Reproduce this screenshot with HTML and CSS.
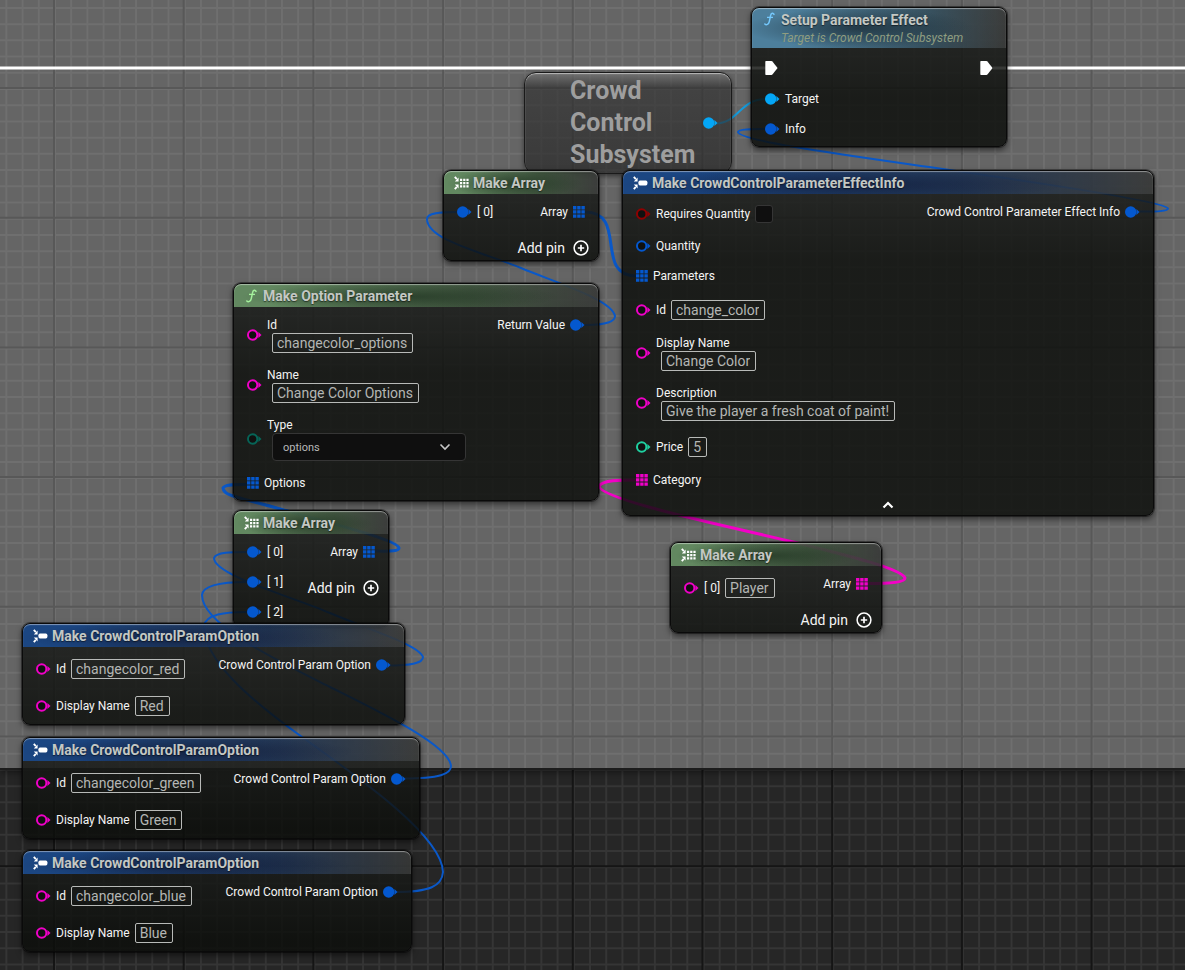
FILE: index.html
```html
<!DOCTYPE html>
<html lang="en">
<head>
    <meta charset="UTF-8">
    <meta name="viewport" content="width=device-width, initial-scale=1.0">
    <title>Blueprint Graph</title>
    <link rel="stylesheet" href="styles.css">
</head>
<body>

    <!-- Icons -->
    <svg class="symbols" width="0" height="0" aria-hidden="true">
        <symbol id="pin" viewBox="0 0 15 12">
            <circle cx="5.7" cy="6" r="5.7" fill="currentColor"/>
            <path d="M11.4 3L14.5 6L11.4 9z" fill="currentColor"/>
        </symbol>
        <symbol id="pin-open" viewBox="0 0 15 12">
            <circle cx="5.7" cy="6" r="4.7" fill="#101110" stroke="currentColor" stroke-width="2"/>
            <path d="M11.4 3L14.5 6L11.4 9z" fill="currentColor"/>
        </symbol>
        <symbol id="pin-array" viewBox="0 0 12 12">
            <path d="M0 0h3.400v3.400H0zM4.200 0h3.400v3.400H4.200zM8.400 0h3.400v3.400H8.400zM0 4.200h3.400v3.400H0zM4.200 4.200h3.400v3.400H4.200zM8.400 4.200h3.400v3.400H8.400zM0 8.400h3.400v3.400H0zM4.200 8.400h3.400v3.400H4.200zM8.400 8.400h3.400v3.400H8.400z" fill="currentColor"/>
        </symbol>
        <symbol id="pin-exec" viewBox="0 0 13 14">
            <path d="M1 0H6.5Q7 0 7.4.4L12.6 7L7.4 13.6Q7 14 6.5 14H1Q.3 14 .3 13.3V.7Q.3 0 1 0z" fill="#fff"/>
        </symbol>
        <symbol id="icon-struct" viewBox="0 0 15 14">
            <path d="M.8 .8L2.8 3.200M.8 13.2L2.8 10.800" stroke="#fff" stroke-width="1.800"/>
            <path d="M4.600 1.600V5.400H.8zM4.600 12.400V8.600H.8z" fill="#fff"/>
            <rect x="5.4" y="4.6" width="9" height="4.8" rx="1.6" fill="#fff"/>
        </symbol>
        <symbol id="icon-array" viewBox="0 0 15 14">
            <path d="M.8 .8L2.8 3.200M.8 13.2L2.8 10.800" stroke="#fff" stroke-width="1.800"/>
            <path d="M4.600 1.600V5.400H.8zM4.600 12.400V8.600H.8z" fill="#fff"/>
            <path d="M6 2.800h2.200v2.200H6zM9.2 2.800h2.200v2.200h-2.200zM12.4 2.800h2.200v2.200h-2.200zM6 6h2.200v2.200H6zM9.2 6h2.200v2.200h-2.200zM12.4 6h2.200v2.200h-2.200zM6 9.200h2.200v2.200H6zM9.2 9.200h2.200v2.200h-2.200zM12.4 9.200h2.200v2.200h-2.200z" fill="#fff"/>
        </symbol>
        <symbol id="icon-function" viewBox="0 0 15 14">
            <path d="M12 2.4C11.2 .6 9.2 1 8.7 3.2L7.2 9.8C6.6 12.4 4.4 13.4 2.8 12" fill="none" stroke="currentColor" stroke-width="1.5" stroke-linecap="round"/>
            <path d="M5 5.4H11" stroke="currentColor" stroke-width="1.3"/>
        </symbol>
        <symbol id="icon-plus" viewBox="0 0 16 16">
            <circle cx="8" cy="8" r="6.9" fill="none" stroke="#fff" stroke-width="1.5"/>
            <path d="M8 4.8V11.2M4.8 8H11.2" stroke="#fff" stroke-width="1.7"/>
        </symbol>
    </svg>

    <main class="graph">

        <!-- Grid: each path is one very wide stroke, its dashes are the lines -->
        <svg class="grid" aria-hidden="true">
            <g class="minor">
                <path d="M-10.850 2000H4000"/>
                <path d="M2000 -9.270V4000"/>
            </g>
            <g class="major">
                <path d="M-76.700 2000H4000"/>
                <path d="M2000 -42.700V4000"/>
            </g>
        </svg>

        <div class="comment-area"></div>

        <svg class="wires" aria-hidden="true">
            <g class="wire-exec">
                <path d="M0 68H766"/>
                <path d="M993 68H4000"/>
            </g>
            <path class="wire-object" d="M716 123.5C738 123.5 740 99 766 99"/>
            <g class="wire-struct">
                <path d="M1137 211.5C1158 212 1168 211 1168 208.5C1166 203 1090 190 946 169.500C860 157 738 141 738 132C738 129 752 129 766 129"/>
                <path d="M582 325C608 325.500 615 321 615 316C612 300 560 284 521 268S427 240 427 219C427 213 440 212 457 212"/>
                <path d="M387 665.500C412 665.500 423 663 423 657C419 645 370 630 330 613S214 575 214 558C216 552 232 552 247 552"/>
                <path d="M403 778.500C440 778.500 451 774 451 766C449 745 380 712 330 687S202 625 202 595C203 584 225 582 247 582"/>
                <path d="M395 892C430 892 442 886 443 872C442 835 355 775 302 737S204 660 204 626C206 614 225 612 247 612"/>
            </g>
            <g class="wire-struct thick">
                <path d="M585 212C628 212 594 276 636 276"/>
                <path d="M375 551C392 551.500 399 551 399 548C398 540 330 523 282 509.500S224 496 223 488C225 484 235 484.500 247 484.500"/>
            </g>
            <path class="wire-string" d="M868 583.500C892 583.500 905 582 905 578C902 569 850 556 793 542S600 500 599 486C603 480 620 480 636 480"/>
        </svg>

        <!-- Crowd Control Subsystem -->
        <section class="node variable subsystem">
            <h2>Crowd Control Subsystem</h2>
            <svg class="pin object"><use href="#pin"/></svg>
        </section>

        <!-- Setup Parameter Effect -->
        <section class="node setup">
            <header class="head cyan tall">
                <svg class="icon"><use href="#icon-function"/></svg>
                <div>
                    <h2>Setup Parameter Effect</h2>
                    <p>Target is Crowd Control Subsystem</p>
                </div>
            </header>
            <div class="body">
                <div class="inputs">
                    <div class="row exec"><svg class="pin"><use href="#pin-exec"/></svg></div>
                    <div class="row"><svg class="pin object"><use href="#pin"/></svg><span>Target</span></div>
                    <div class="row"><svg class="pin struct"><use href="#pin"/></svg><span>Info</span></div>
                </div>
                <div class="outputs">
                    <div class="row exec"><svg class="pin"><use href="#pin-exec"/></svg></div>
                </div>
            </div>
        </section>

        <!-- Make Array: parameters -->
        <section class="node array-params">
            <header class="head green">
                <svg class="icon"><use href="#icon-array"/></svg>
                <h2>Make Array</h2>
            </header>
            <div class="body">
                <div class="inputs">
                    <div class="row"><svg class="pin struct"><use href="#pin"/></svg><span>[ 0]</span></div>
                </div>
                <div class="outputs">
                    <div class="row"><span>Array</span><svg class="pin array struct"><use href="#pin-array"/></svg></div>
                    <button class="add-pin" type="button">Add pin <svg><use href="#icon-plus"/></svg></button>
                </div>
            </div>
        </section>

        <!-- Make CrowdControlParameterEffectInfo -->
        <section class="node effect-info">
            <header class="head blue">
                <svg class="icon"><use href="#icon-struct"/></svg>
                <h2>Make CrowdControlParameterEffectInfo</h2>
            </header>
            <div class="body">
                <div class="inputs">
                    <div class="row check">
                        <svg class="pin bool"><use href="#pin-open"/></svg>
                        <label for="requires">Requires Quantity</label>
                        <input type="checkbox" id="requires">
                    </div>
                    <div class="row"><svg class="pin struct"><use href="#pin-open"/></svg><span>Quantity</span></div>
                    <div class="row"><svg class="pin array struct"><use href="#pin-array"/></svg><span>Parameters</span></div>
                    <div class="row field">
                        <svg class="pin string"><use href="#pin-open"/></svg>
                        <label for="effect-id">Id</label>
                        <input type="text" id="effect-id" value="change_color">
                    </div>
                    <div class="row stacked">
                        <svg class="pin string"><use href="#pin-open"/></svg>
                        <div>
                            <label for="effect-name">Display Name</label>
                            <input type="text" id="effect-name" value="Change Color">
                        </div>
                    </div>
                    <div class="row stacked">
                        <svg class="pin string"><use href="#pin-open"/></svg>
                        <div>
                            <label for="effect-desc">Description</label>
                            <input type="text" id="effect-desc" value="Give the player a fresh coat of paint!">
                        </div>
                    </div>
                    <div class="row field">
                        <svg class="pin int"><use href="#pin-open"/></svg>
                        <label for="effect-price">Price</label>
                        <input type="text" id="effect-price" value="5">
                    </div>
                    <div class="row"><svg class="pin array string"><use href="#pin-array"/></svg><span>Category</span></div>
                </div>
                <div class="outputs">
                    <div class="row"><span>Crowd Control Parameter Effect Info</span><svg class="pin struct"><use href="#pin"/></svg></div>
                </div>
            </div>
            <button class="collapse" type="button" aria-label="Collapse">
                <svg viewBox="0 0 12 8"><path d="M1.500 6.500L6 2L10.500 6.500" fill="none" stroke="#fff" stroke-width="2.200"/></svg>
            </button>
        </section>

        <!-- Make Option Parameter -->
        <section class="node option-param">
            <header class="head green">
                <svg class="icon"><use href="#icon-function"/></svg>
                <h2>Make Option Parameter</h2>
            </header>
            <div class="body">
                <div class="inputs">
                    <div class="row stacked">
                        <svg class="pin string"><use href="#pin-open"/></svg>
                        <div>
                            <label for="option-id">Id</label>
                            <input type="text" id="option-id" value="changecolor_options">
                        </div>
                    </div>
                    <div class="row stacked">
                        <svg class="pin string"><use href="#pin-open"/></svg>
                        <div>
                            <label for="option-name">Name</label>
                            <input type="text" id="option-name" value="Change Color Options">
                        </div>
                    </div>
                    <div class="row stacked type">
                        <svg class="pin enum"><use href="#pin-open"/></svg>
                        <div>
                            <label for="option-type">Type</label>
                            <div class="select">
                                <select id="option-type">
                                    <option>options</option>
                                </select>
                                <svg viewBox="0 0 12 8"><path d="M1.500 1.500L6 6L10.500 1.500" fill="none" stroke="#c8c8c8" stroke-width="1.600"/></svg>
                            </div>
                        </div>
                    </div>
                    <div class="row"><svg class="pin array struct"><use href="#pin-array"/></svg><span>Options</span></div>
                </div>
                <div class="outputs">
                    <div class="row"><span>Return Value</span><svg class="pin struct"><use href="#pin"/></svg></div>
                </div>
            </div>
        </section>

        <!-- Make Array: options -->
        <section class="node array-options">
            <header class="head green">
                <svg class="icon"><use href="#icon-array"/></svg>
                <h2>Make Array</h2>
            </header>
            <div class="body">
                <div class="inputs">
                    <div class="row"><svg class="pin struct"><use href="#pin"/></svg><span>[ 0]</span></div>
                    <div class="row"><svg class="pin struct"><use href="#pin"/></svg><span>[ 1]</span></div>
                    <div class="row"><svg class="pin struct"><use href="#pin"/></svg><span>[ 2]</span></div>
                </div>
                <div class="outputs">
                    <div class="row"><span>Array</span><svg class="pin array struct"><use href="#pin-array"/></svg></div>
                    <button class="add-pin" type="button">Add pin <svg><use href="#icon-plus"/></svg></button>
                </div>
            </div>
        </section>

        <!-- Make Array: category -->
        <section class="node array-category">
            <header class="head green">
                <svg class="icon"><use href="#icon-array"/></svg>
                <h2>Make Array</h2>
            </header>
            <div class="body">
                <div class="inputs">
                    <div class="row field">
                        <svg class="pin string"><use href="#pin-open"/></svg>
                        <label for="category-0">[ 0]</label>
                        <input type="text" id="category-0" value="Player">
                    </div>
                </div>
                <div class="outputs">
                    <div class="row"><span>Array</span><svg class="pin array string"><use href="#pin-array"/></svg></div>
                    <button class="add-pin" type="button">Add pin <svg><use href="#icon-plus"/></svg></button>
                </div>
            </div>
        </section>

        <!-- Make CrowdControlParamOption: red, green, blue -->
        <section class="node param-red">
            <header class="head blue">
                <svg class="icon"><use href="#icon-struct"/></svg>
                <h2>Make CrowdControlParamOption</h2>
            </header>
            <div class="body">
                <div class="inputs">
                    <div class="row field">
                        <svg class="pin string"><use href="#pin-open"/></svg>
                        <label for="red-id">Id</label>
                        <input type="text" id="red-id" value="changecolor_red">
                    </div>
                    <div class="row field">
                        <svg class="pin string"><use href="#pin-open"/></svg>
                        <label for="red-name">Display Name</label>
                        <input type="text" id="red-name" value="Red">
                    </div>
                </div>
                <div class="outputs">
                    <div class="row"><span>Crowd Control Param Option</span><svg class="pin struct"><use href="#pin"/></svg></div>
                </div>
            </div>
        </section>

        <section class="node param-green">
            <header class="head blue">
                <svg class="icon"><use href="#icon-struct"/></svg>
                <h2>Make CrowdControlParamOption</h2>
            </header>
            <div class="body">
                <div class="inputs">
                    <div class="row field">
                        <svg class="pin string"><use href="#pin-open"/></svg>
                        <label for="green-id">Id</label>
                        <input type="text" id="green-id" value="changecolor_green">
                    </div>
                    <div class="row field">
                        <svg class="pin string"><use href="#pin-open"/></svg>
                        <label for="green-name">Display Name</label>
                        <input type="text" id="green-name" value="Green">
                    </div>
                </div>
                <div class="outputs">
                    <div class="row"><span>Crowd Control Param Option</span><svg class="pin struct"><use href="#pin"/></svg></div>
                </div>
            </div>
        </section>

        <section class="node param-blue">
            <header class="head blue">
                <svg class="icon"><use href="#icon-struct"/></svg>
                <h2>Make CrowdControlParamOption</h2>
            </header>
            <div class="body">
                <div class="inputs">
                    <div class="row field">
                        <svg class="pin string"><use href="#pin-open"/></svg>
                        <label for="blue-id">Id</label>
                        <input type="text" id="blue-id" value="changecolor_blue">
                    </div>
                    <div class="row field">
                        <svg class="pin string"><use href="#pin-open"/></svg>
                        <label for="blue-name">Display Name</label>
                        <input type="text" id="blue-name" value="Blue">
                    </div>
                </div>
                <div class="outputs">
                    <div class="row"><span>Crowd Control Param Option</span><svg class="pin struct"><use href="#pin"/></svg></div>
                </div>
            </div>
        </section>

    </main>

</body>
</html>
```
FILE: styles.css
```css
* {
    box-sizing: border-box;
}

body {
    margin: 0;
    background-color: #262626;
    color: #f4f4f4;
    font-family: Roboto, sans-serif;
    font-size: 12px;
    line-height: 16px;
}

h2,
p {
    margin: 0;
}

.symbols {
    position: absolute;
}

.graph {
    position: relative;
    min-height: 100vh;
    overflow: hidden;
}

.grid,
.wires {
    position: absolute;
    top: 0;
    left: 0;
    width: 100%;
    height: 100%;
}

.grid path {
    fill: none;
    stroke-width: 4000;
}

.grid .minor {
    stroke: #353535;
    stroke-dasharray: 2 14.2125;
}

.grid .major {
    stroke: #151515;
    stroke-dasharray: 2 127.7;
}

/* Comment box that covers the upper part of the graph */
.comment-area {
    position: absolute;
    top: 0;
    left: 0;
    width: 100%;
    height: 770px;
    background-color: rgba(255, 255, 255, 0.29);
    border-bottom: 2px solid #1c1c1c;
    box-shadow: 0 2px 8px rgba(0, 0, 0, 0.5);
}

/* Wires */
.wires path {
    fill: none;
    stroke-width: 2;
}

.wires .wire-exec path {
    stroke: #fff;
    stroke-width: 3;
}

.wire-object {
    stroke: #149bdc;
}

.wire-struct path {
    stroke: #0a58c8;
}

.wires .thick path,
.wires .wire-string {
    stroke-width: 3;
}

.wire-string {
    stroke: #f400c8;
}

/* Nodes */
.node {
    position: absolute;
    border: 1px solid #0a0a0a;
    border-radius: 8px;
    background: linear-gradient(rgba(28, 30, 28, 0.84), rgba(12, 14, 11, 0.84) 90px);
    box-shadow: 0 0 0 1px rgba(0, 0, 0, 0.4), 0 3px 6px rgba(0, 0, 0, 0.55);
}

.setup { left: 751px; top: 7px; width: 256px; }
.subsystem { left: 524px; top: 72px; width: 208px; }
.array-params { left: 443px; top: 170px; width: 156px; }
.effect-info { left: 622px; top: 170px; width: 532px; }
.option-param { left: 233px; top: 283px; width: 366px; }
.array-options { left: 233px; top: 510px; width: 156px; }
.array-category { left: 670px; top: 542px; width: 212px; }
.param-red { left: 22px; top: 623px; width: 383px; }
.param-green { left: 22px; top: 737px; width: 398px; }
.param-blue { left: 22px; top: 850px; width: 390px; }

.head {
    display: flex;
    align-items: center;
    gap: 4px;
    height: 23px;
    padding-left: 10px;
    border-radius: 7px 7px 0 0;
    box-shadow: inset 0 1px 1px rgba(255, 255, 255, 0.45);
}

.head h2 {
    color: #c4c8c4;
    font-size: 14px;
    font-weight: 700;
    line-height: 16px;
    text-shadow: 0 1px 1px rgba(0, 0, 0, 0.5);
}

.head.green {
    color: #a4f09c;
    background: radial-gradient(ellipse 44% 60% at 46% 55%, rgba(26, 46, 28, 0.65), transparent), linear-gradient(90deg, #628860 10%, #56785490 65%, #60606060);
}

.head.blue {
    background: radial-gradient(ellipse 42% 70% at 42% 60%, rgba(16, 24, 52, 0.7), transparent), linear-gradient(90deg, #1b4682 15%, #24467a90 65%, #60606060);
}

.head.cyan {
    color: #74c8fc;
    background: radial-gradient(ellipse 45% 50% at 42% 50%, rgba(26, 44, 54, 0.75), transparent), linear-gradient(90deg, #4d7f9c 15%, #44708a90 70%, #60606060);
}

.head.tall {
    align-items: flex-start;
    height: 40px;
    padding-top: 4px;
}

.head.tall p {
    color: #8f9d80;
    font-style: italic;
    line-height: 20px;
}

.icon {
    width: 15px;
    height: 14px;
}

.body {
    display: flex;
    justify-content: space-between;
    padding: 3px 13px 0;
}

.row {
    display: flex;
    align-items: center;
    gap: 5px;
    height: 30px;
    white-space: nowrap;
}

.outputs {
    display: flex;
    flex-direction: column;
    align-items: flex-end;
}

.row.exec {
    height: 33px;
}

.row.check {
    height: 34px;
}

.row.field {
    height: 37px;
}

.row.stacked {
    height: 50px;
}

.row.type {
    height: 58px;
}

.row.stacked label,
.row.stacked input {
    display: block;
}

.row.stacked input,
.select {
    margin-left: 5px;
}

.setup,
.option-param {
    padding-bottom: 2px;
}

/* Pins */
.pin {
    flex: none;
    width: 15px;
    height: 12px;
}

.pin.array {
    width: 12px;
    height: 12px;
}

.exec .pin {
    width: 13px;
    height: 14px;
}

.struct { color: #0458cf; }
.object { color: #04a6f6; }
.string { color: #f000c8; }
.bool { color: #900000; }
.int { color: #1fd0a0; }
.enum { color: #066457; }

/* Controls */
input[type="text"] {
    field-sizing: content;
    height: 20px;
    padding: 0 5px 0 4px;
    border: 1px solid #b8bab8;
    border-radius: 2px;
    background: transparent;
    color: #b4b6b4;
    font-family: inherit;
    font-size: 14px;
    line-height: 18px;
}

input[type="checkbox"] {
    appearance: none;
    width: 18px;
    height: 18px;
    margin: 0;
    border: 1px solid #353535;
    border-radius: 3px;
    background-color: #0f0f0f;
}

.select {
    position: relative;
    width: 194px;
}

.select select {
    appearance: none;
    display: block;
    width: 100%;
    height: 28px;
    padding: 0 10px;
    border: 1px solid #353535;
    border-radius: 4px;
    background-color: #0f0f0f;
    color: #b8b8b8;
    font-family: inherit;
    font-size: 11px;
}

.select svg {
    position: absolute;
    top: 10px;
    right: 15px;
    width: 12px;
    height: 8px;
    pointer-events: none;
}

button {
    border: none;
    background: none;
    color: inherit;
    font-family: inherit;
    cursor: pointer;
}

.add-pin {
    display: flex;
    align-items: center;
    gap: 8px;
    height: 24px;
    margin: 9px -4px 0 0;
    padding: 0;
    font-size: 14px;
    white-space: nowrap;
}

.add-pin svg {
    width: 16px;
    height: 16px;
}

.collapse {
    display: block;
    height: 20px;
    margin: 0 auto;
    padding: 0;
}

.collapse svg {
    display: block;
    width: 12px;
    height: 8px;
}

/* Variable node */
.variable {
    display: flex;
    align-items: center;
    justify-content: space-between;
    padding: 2px 13px 2px 45px;
    border-color: #1a1a1a;
    border-radius: 12px;
    background: linear-gradient(rgba(120, 120, 120, 0.7), rgba(48, 48, 48, 0.65) 14px, rgba(34, 34, 34, 0.65));
    box-shadow: inset 0 1px 1px rgba(255, 255, 255, 0.5), 0 2px 5px rgba(0, 0, 0, 0.5);
}

.variable h2 {
    width: 122px;
    color: #9e9e9e;
    font-size: 25px;
    font-weight: 700;
    line-height: 32px;
}
```
